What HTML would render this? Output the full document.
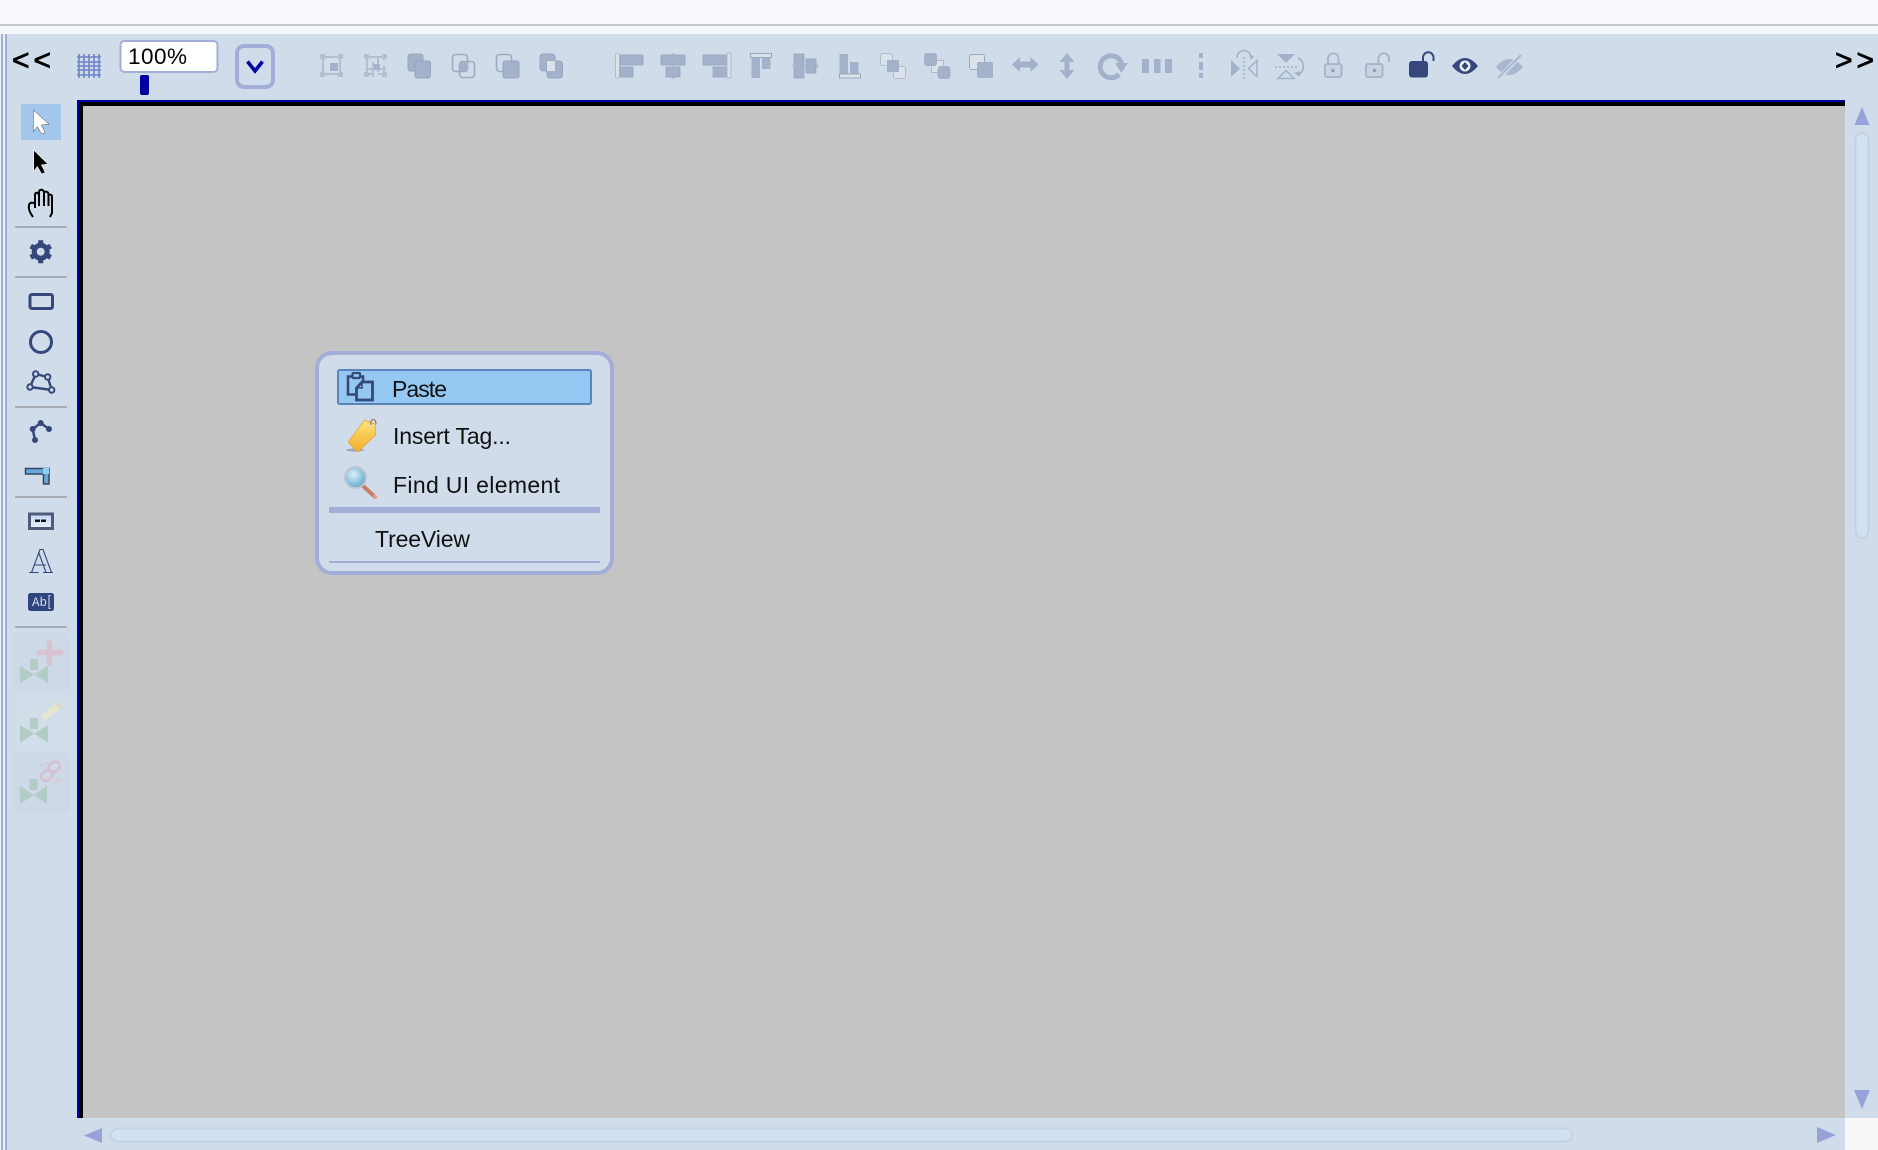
<!DOCTYPE html>
<html>
<head>
<meta charset="utf-8">
<title>Canvas editor</title>
<style>
html,body{margin:0;padding:0;width:1878px;height:1150px;overflow:hidden;background:#f8f9fc}
svg{position:absolute;left:0;top:0;display:block}
text{font-family:"Liberation Sans",sans-serif}
</style>
</head>
<body>
<svg width="1878" height="1150" viewBox="0 0 1878 1150" xmlns="http://www.w3.org/2000/svg">
<defs>
<linearGradient id="tagG" x1="0" y1="0" x2="0" y2="1"><stop offset="0" stop-color="#ffe27a"/><stop offset="1" stop-color="#efb02a"/></linearGradient>
<radialGradient id="lensG" cx=".4" cy=".35" r=".8"><stop offset="0" stop-color="#d8f0fa"/><stop offset="1" stop-color="#4c9ac6"/></radialGradient>
<linearGradient id="fieldG" x1="0" y1="0" x2="0" y2="1"><stop offset="0" stop-color="#c8d6fa"/><stop offset="1" stop-color="#e8eefc"/></linearGradient>
</defs>

<!-- chrome -->
<rect x="0" y="0" width="1878" height="24" fill="#f8f9fc"/>
<rect x="0" y="24" width="1878" height="2" fill="#c4c5ca"/>
<rect x="0" y="26" width="1878" height="8" fill="#f3f6fb"/>
<rect x="0" y="34" width="1878" height="1116" fill="#d0dcea"/>
<rect x="0" y="34" width="7" height="1116" fill="#eef1f8"/>
<rect x="1" y="34" width="2" height="1116" fill="#a2aed8"/>
<rect x="5" y="34" width="2" height="1116" fill="#a2aed8"/>

<!-- canvas -->
<rect x="77" y="100" width="1768" height="1018" fill="#0000a8"/>
<rect x="79" y="102" width="1766" height="1016" fill="#000"/>
<rect x="83" y="106" width="1762" height="1012" fill="#c4c4c4"/>

<!-- scrollbars -->
<rect x="1845" y="1118" width="33" height="32" fill="#f8f8f8"/>
<polygon points="1862,107 1869.5,125 1854.5,125" fill="#98a2da"/>
<polygon points="1854,1090 1870,1090 1862,1109" fill="#98a2da"/>
<polygon points="84,1135.5 102,1128 102,1143" fill="#98a2da"/>
<polygon points="1817,1127 1836,1135 1817,1143" fill="#98a2da"/>
<rect x="1855.5" y="133" width="13" height="405" rx="6.5" fill="#d0e2f1" stroke="#c4d2e3" stroke-width="2"/>
<rect x="111" y="1128.5" width="1461" height="13" rx="6.5" fill="#d0e2f1" stroke="#c4d2e3" stroke-width="2"/>

<!-- top left controls -->
<text x="12" y="70" font-size="30" fill="#000" stroke="#000" stroke-width=".8" textLength="39">&lt;&lt;</text>
<text x="1835" y="70" font-size="30" fill="#000" stroke="#000" stroke-width=".8" textLength="39">&gt;&gt;</text>
<g stroke="#6a80c6" stroke-width="1.6" fill="none" opacity=".95">
<path d="M79 54V78M84 54V78M89 54V78M94 54V78M99 54V78"/>
<path d="M77 57H101M77 62H101M77 66H101M77 70H101M77 75H101"/>
</g>
<rect x="120.5" y="41" width="97" height="31" rx="4" fill="#fff" stroke="#a2aed8" stroke-width="2"/>
<text x="128" y="64" font-size="22.500" fill="#000" textLength="59">100%</text>
<rect x="140" y="75" width="9" height="20" rx="2" fill="#0000a0"/>
<rect x="237" y="46" width="36" height="41" rx="7" fill="none" stroke="#a2aed8" stroke-width="4"/>
<path d="M247.500 61.500L255 71L262.500 61.500" fill="none" stroke="#0000a8" stroke-width="3.600"/>

<!-- disabled toolbar icons -->
<g fill="#a3b1ca" stroke="none">
<!-- group -->
<rect x="323" y="57" width="17" height="17" fill="none" stroke="#b3bed1" stroke-width="2"/>
<g fill="#b3bed1"><rect x="320" y="54" width="5" height="5" rx="1"/><rect x="338" y="54" width="5" height="5" rx="1"/><rect x="320" y="72" width="5" height="5" rx="1"/><rect x="338" y="72" width="5" height="5" rx="1"/></g>
<rect x="326" y="60" width="12" height="12" fill="#d8dfe9"/><rect x="330" y="63" width="8" height="8"/>
<!-- ungroup -->
<path d="M367 57H384V60M367 57V74H373M378 74H384V66M373 62V77M365 69H386M378 57V72" fill="none" stroke="#b3bed1" stroke-width="2"/>
<g fill="#b3bed1"><rect x="364" y="54" width="5" height="5" rx="1"/><rect x="382" y="54" width="5" height="5" rx="1"/><rect x="364" y="72" width="5" height="5" rx="1"/><rect x="382" y="72" width="5" height="5" rx="1"/></g>
<rect x="374" y="64" width="6" height="6"/>
<!-- booleans -->
<rect x="408" y="54" width="15" height="17" rx="2.500" stroke="#97a5bd" stroke-width="1"/>
<rect x="415" y="61" width="15.500" height="17" rx="2" stroke="#97a5bd" stroke-width="1"/>
<rect x="452.500" y="54.500" width="15" height="17" rx="3" fill="none" stroke="#a0aabb" stroke-width="1.600"/>
<rect x="459.500" y="61.500" width="15" height="16" rx="3" fill="none" stroke="#a0aabb" stroke-width="1.600"/>
<rect x="460" y="62" width="8" height="9"/>
<rect x="496.500" y="54.500" width="15" height="17" rx="3" fill="none" stroke="#a0aabb" stroke-width="1.600"/>
<rect x="503" y="61" width="16" height="17" rx="2" stroke="#97a5bd" stroke-width="1"/>
<rect x="540" y="54" width="15" height="17" rx="3" stroke="#97a5bd" stroke-width="1"/>
<rect x="547" y="61" width="15.500" height="17" rx="3" stroke="#97a5bd" stroke-width="1"/>
<rect x="547" y="61" width="8" height="10" fill="#dce2ea"/>

<!-- align left -->
<rect x="615.500" y="53" width="4" height="25" rx="1.500" fill="#dce2ea" stroke="#b0bbcd" stroke-width="1"/>
<rect x="620" y="55" width="23" height="10" stroke="#97a5bd" stroke-width=".8"/>
<rect x="620" y="67" width="13" height="10" stroke="#97a5bd" stroke-width=".8"/>
<!-- align centre -->
<rect x="661" y="55" width="24" height="10" stroke="#97a5bd" stroke-width=".8"/>
<rect x="666" y="67" width="14" height="10" stroke="#97a5bd" stroke-width=".8"/>
<path d="M673 53V55M673 65V67M673 77V79" stroke="#b0bbcd" stroke-width="3" fill="none"/>
<!-- align right -->
<rect x="703" y="55" width="23.500" height="10" stroke="#97a5bd" stroke-width=".8"/>
<rect x="713" y="67" width="13.500" height="10" stroke="#97a5bd" stroke-width=".8"/>
<rect x="727" y="53" width="4" height="25" rx="1.500" fill="#dce2ea" stroke="#b0bbcd" stroke-width="1"/>
<!-- align top -->
<rect x="750.500" y="53.500" width="21" height="4" fill="#dce2ea" stroke="#9aa6bb" stroke-width="1"/>
<rect x="751.500" y="58" width="8.500" height="20"/>
<rect x="762" y="58" width="8.500" height="11"/>
<!-- align middle -->
<rect x="794" y="54" width="10" height="24" stroke="#97a5bd" stroke-width=".8"/>
<rect x="806" y="59" width="10" height="14" stroke="#97a5bd" stroke-width=".8"/>
<path d="M792.500 66H795M804 66H806M816 66H818.500" stroke="#b0bbcd" stroke-width="3" fill="none"/>
<!-- align bottom -->
<rect x="839.500" y="54" width="8.500" height="20"/>
<rect x="850" y="62" width="8.500" height="12"/>
<rect x="839.500" y="74" width="21" height="4" fill="#dce2ea" stroke="#9aa6bb" stroke-width="1"/>
<!-- order -->
<rect x="880.500" y="53.500" width="12" height="12" rx="2" fill="#dce2ea" stroke="#b0bbcd"/>
<rect x="893.500" y="66.500" width="12" height="12" rx="2" fill="#dce2ea" stroke="#b0bbcd"/>
<rect x="887" y="60" width="12" height="12"/>
<rect x="931.500" y="60.500" width="12" height="12" fill="#dce2ea" stroke="#b0bbcd"/>
<rect x="924" y="53" width="13" height="13" rx="3"/>
<rect x="937.500" y="66" width="13" height="13" rx="3"/>
<rect x="969.500" y="54.500" width="15" height="15" rx="2" fill="#dce2ea" stroke="#a0aabb"/>
<rect x="977" y="62" width="16" height="16" rx="2"/>
<!-- arrows -->
<polygon points="1012,64.500 1020,57 1020,61.500 1030.500,61.500 1030.500,57 1038.500,64.500 1030.500,72 1030.500,67.500 1020,67.500 1020,72"/>
<polygon points="1067,53 1074.500,62 1069.500,62 1069.500,70 1074.500,70 1067,79 1059.500,70 1064.500,70 1064.500,62 1059.500,62"/>
<path d="M1121.500 63A11 11 0 1 0 1119 74.500" fill="none" stroke="#a3b1ca" stroke-width="5"/>
<polygon points="1115,63 1128,63 1121.500,73"/>
<rect x="1142" y="59" width="7" height="14"/><rect x="1154" y="59" width="6.500" height="14"/><rect x="1165" y="59" width="7" height="14"/>
<rect x="1199" y="53" width="4" height="5"/><rect x="1199" y="62" width="4" height="8"/><rect x="1199" y="73" width="4" height="5"/>
<!-- flip h -->
<polygon points="1231,60 1240,68.500 1231,77"/>
<polygon points="1257,60.500 1257,76.500 1248.500,68.500" fill="none" stroke="#a3b1ca" stroke-width="1.500"/>
<path d="M1244 57V79" stroke="#a3b1ca" stroke-width="1.500" stroke-dasharray="2 2" fill="none"/>
<path d="M1237 58A7 7 0 0 1 1251 57" stroke="#a3b1ca" stroke-width="1.500" fill="none"/>
<polygon points="1249,55 1254,56 1251,60"/>
<!-- flip v -->
<polygon points="1277,54 1295,54 1286,63"/>
<polygon points="1278,78.500 1294,78.500 1286,70.500" fill="none" stroke="#a3b1ca" stroke-width="1.500"/>
<path d="M1275 67H1297" stroke="#a3b1ca" stroke-width="1.500" stroke-dasharray="2 2" fill="none"/>
<path d="M1298 58A8 9 0 0 1 1298 75" stroke="#a3b1ca" stroke-width="1.500" fill="none"/>
<polygon points="1294,73 1300,71 1300,77"/>
<!-- locks -->
<rect x="1325" y="64" width="16.500" height="13" rx="2" fill="#cad4e3" stroke="#a9b5cb" stroke-width="2"/>
<path d="M1328 64V58.500A5 5 0 0 1 1338.500 58.500V64" fill="none" stroke="#a9b5cb" stroke-width="2"/>
<circle cx="1333" cy="70.500" r="1.800" fill="#8f9fba"/>
<rect x="1366" y="64" width="16.500" height="13" rx="2" fill="#cad4e3" stroke="#a9b5cb" stroke-width="2"/>
<path d="M1378.500 64V58.500A5 5 0 0 1 1389 58.500V62" fill="none" stroke="#a9b5cb" stroke-width="2"/>
<circle cx="1374.500" cy="70.500" r="1.800" fill="#8f9fba"/>
</g>

<!-- enabled lock / eye -->
<rect x="1409" y="61" width="19" height="16.500" rx="3" fill="#36477b"/>
<path d="M1423 62V57.500A5 5 0 0 1 1433.500 57.500V61" fill="none" stroke="#36477b" stroke-width="2"/>
<path d="M1452 66Q1465 50 1478 66Q1465 82 1452 66Z" fill="#36477b"/>
<circle cx="1465" cy="66" r="5.500" fill="#eaf0f8"/>
<polygon points="1465,62 1468.500,66 1465,70 1461.500,66" fill="#36477b"/>
<path d="M1496 67Q1509 51 1523 67Q1509 83 1496 67Z" fill="#a9b6cd"/>
<path d="M1500 77L1520 56" stroke="#d0dcea" stroke-width="4.500" fill="none"/>
<path d="M1498 78L1521 55" stroke="#a9b6cd" stroke-width="2" fill="none"/>

<!-- left tools -->
<rect x="21" y="104" width="40" height="36" fill="#a3c6ec"/>
<polygon points="33.300,110 49,124.300 41.300,125 45.300,132.700 41.700,134 37.300,126.700 33.300,131.700" fill="#fff" stroke="#444" stroke-width=".5"/>
<polygon points="33.700,150 48,164 41.500,165 45.300,172.500 41.700,174 37.300,166.500 33.700,171.500" fill="#000" stroke="#fff" stroke-width=".6"/>
<path transform="translate(0 1)" d="M33 216C30 212 28 208 29 204C30 201 33 201 35 203V194C35 191 38 191 39 194V191C39 188 43 188 44 191V192C44 190 48 190 48.500 193V195C49 193 52 193 52 196V212L50 216M35 203V207M39 194V205M44 192V205M48.500 194V205" fill="none" stroke="#000" stroke-width="2"/>
<rect x="15" y="226" width="52" height="2" fill="#a9aeb6"/>
<circle cx="40.700" cy="251.700" r="6.500" fill="none" stroke="#36477b" stroke-width="5"/>
<path d="M40.700 240.200V245M40.700 258.500V263.200M30.700 246L34.700 248.300M46.700 255.100L50.700 257.400M30.700 257.400L34.700 255.100M46.700 248.300L50.700 246" stroke="#36477b" stroke-width="5" fill="none"/>
<rect x="15" y="276" width="52" height="2" fill="#a9aeb6"/>
<rect x="30" y="294.500" width="22.500" height="14" rx="2" fill="none" stroke="#36477b" stroke-width="3"/>
<circle cx="41" cy="342" r="10.500" fill="none" stroke="#36477b" stroke-width="3"/>
<g transform="translate(0 1)">
<path d="M35.700 373L47.700 376L51.700 389L30 386Z" fill="none" stroke="#36477b" stroke-width="2.400"/>
<g fill="#d0dcea" stroke="#36477b" stroke-width="2">
<circle cx="35.700" cy="373" r="2.700"/><circle cx="47.700" cy="376" r="2.700"/><circle cx="51.700" cy="389" r="2.700"/><circle cx="30" cy="386" r="2.700"/>
</g>
</g>
<rect x="15" y="406" width="52" height="2" fill="#a9aeb6"/>
<path d="M35 440L32.700 429L40.700 423L49 429" fill="none" stroke="#36477b" stroke-width="2.500"/>
<g fill="#36477b"><circle cx="35" cy="440" r="3"/><circle cx="32.700" cy="429" r="3"/><circle cx="40.700" cy="423" r="3"/><circle cx="49" cy="429" r="3"/></g>
<path d="M25.500 468.500H49V484H43.500V474H25.500Z" fill="#6ba6d8" stroke="#36465e" stroke-width="1.500"/>
<rect x="43" y="468" width="6" height="6" fill="#8fd0f4"/>
<rect x="15" y="496" width="52" height="2" fill="#a9aeb6"/>
<rect x="29.500" y="514" width="23" height="14.500" fill="url(#fieldG)" stroke="#4f5a7c" stroke-width="3"/>
<rect x="35" y="519.500" width="5" height="2.500" fill="#111"/><rect x="41" y="519.500" width="5" height="2.500" fill="#111"/>
<path d="M29 572.500H38.500M43 572.500H53M31.500 572.500L40 549.500H43L51.500 572.500M46 572.500L38.500 552M34 565H46" fill="none" stroke="#36477b" stroke-width="1.100"/>
<rect x="28" y="593" width="26" height="18" rx="2.500" fill="#2f4580"/>
<text x="32" y="606" font-size="12.500" fill="#d6dff0" style="font-family:'Liberation Mono',monospace" textLength="15">Ab</text>
<path d="M50.500 595.500H49V608.500H50.500" fill="none" stroke="#d6dff0" stroke-width="1"/>
<rect x="15" y="626" width="52" height="2" fill="#a9aeb6"/>

<!-- disabled valve buttons -->
<rect x="12" y="632" width="58" height="60" rx="7" fill="#cdd9e7"/>
<rect x="14" y="695" width="55" height="57" rx="7" fill="#d2ddea"/>
<rect x="12" y="753" width="58" height="60" rx="7" fill="#cdd9e7"/>
<g fill="#b3ccc5">
<rect x="30" y="659" width="8" height="11"/>
<polygon points="20,666 34,674.500 20,683"/><polygon points="48,666 34,674.500 48,683"/>
<rect x="30" y="718" width="8" height="11"/>
<polygon points="20,725 34,733.500 20,743"/><polygon points="48,725 34,733.500 48,743"/>
<rect x="29.500" y="779" width="8" height="11"/>
<polygon points="20,786 34,795 20,804"/><polygon points="47,786 34,795 47,804"/>
</g>
<path d="M39 652.500H61M49.500 643V663" stroke="#d9c3d0" stroke-width="5.500" stroke-linecap="round" fill="none"/>
<path d="M43.500 718L60 704" stroke="#e6e6cc" stroke-width="6.500" fill="none"/>
<path d="M57 706.500L60 704" stroke="#d8dcc8" stroke-width="8" fill="none"/>
<g fill="none" stroke="#d9bfcd" stroke-width="2.400">
<rect x="48" y="762.500" width="12" height="9" rx="4.500" transform="rotate(-40 54 767)"/>
<rect x="41" y="771" width="12" height="9" rx="4.500" transform="rotate(-40 47 775.500)"/>
<path d="M40 764L45 766M47 762V764M56 779L61 781M56 781V784" stroke-width="1.200"/>
</g>

<!-- context menu -->
<rect x="317" y="353" width="295" height="220" rx="15" fill="#d0dcea" stroke="#a2aed8" stroke-width="4"/>
<rect x="338" y="370" width="253" height="34" rx="1.500" fill="#94c8f2" stroke="#5b84b8" stroke-width="2"/>

<!-- clipboard -->
<path d="M355 394.500H348V376.500H353M358.500 376.500H363V381" fill="none" stroke="#36477b" stroke-width="2.600"/>
<rect x="352.500" y="373" width="7.500" height="5" rx="1" fill="#94c8f2" stroke="#36477b" stroke-width="2.200"/>
<path d="M362 382H372.500V400H356.500V388Z" fill="none" stroke="#36477b" stroke-width="2.800"/>
<path d="M362 382V388H356.500" fill="none" stroke="#36477b" stroke-width="1.500"/>

<text x="392" y="397" font-size="23" fill="#111" textLength="55">Paste</text>

<!-- tag -->
<ellipse cx="355" cy="450" rx="9" ry="1.500" fill="#8a8f96" opacity=".7"/>
<path d="M364.500 420L375.500 424.500V435L358.500 451.500Q357.500 452 356.500 451L349 443Q348 442 349 441Z" fill="url(#tagG)" stroke="#e0a030" stroke-width=".7"/>
<circle cx="371" cy="425.500" r="1.500" fill="#d0dcea"/>
<path d="M371 425C369 419 376 417 376 424" fill="none" stroke="#9b6a3c" stroke-width="1"/>
<text x="393" y="444" font-size="23" fill="#111" textLength="118">Insert Tag...</text>

<!-- magnifier -->
<path d="M362 485L374.500 496.500" stroke="#c97c6a" stroke-width="4" stroke-linecap="round" fill="none"/>
<circle cx="375" cy="497" r="2.200" fill="#e6a090"/>
<circle cx="355.500" cy="477.500" r="10.500" fill="url(#lensG)" stroke="#bcc6cf" stroke-width="2"/>
<text x="393" y="493" font-size="23" fill="#111" textLength="167">Find UI element</text>

<rect x="329" y="507" width="271" height="6" fill="#a2aed8"/>
<text x="375" y="547" font-size="23" fill="#111" textLength="95">TreeView</text>
<rect x="329" y="561" width="271" height="2" fill="#a2aed8"/>
</svg>
</body>
</html>
